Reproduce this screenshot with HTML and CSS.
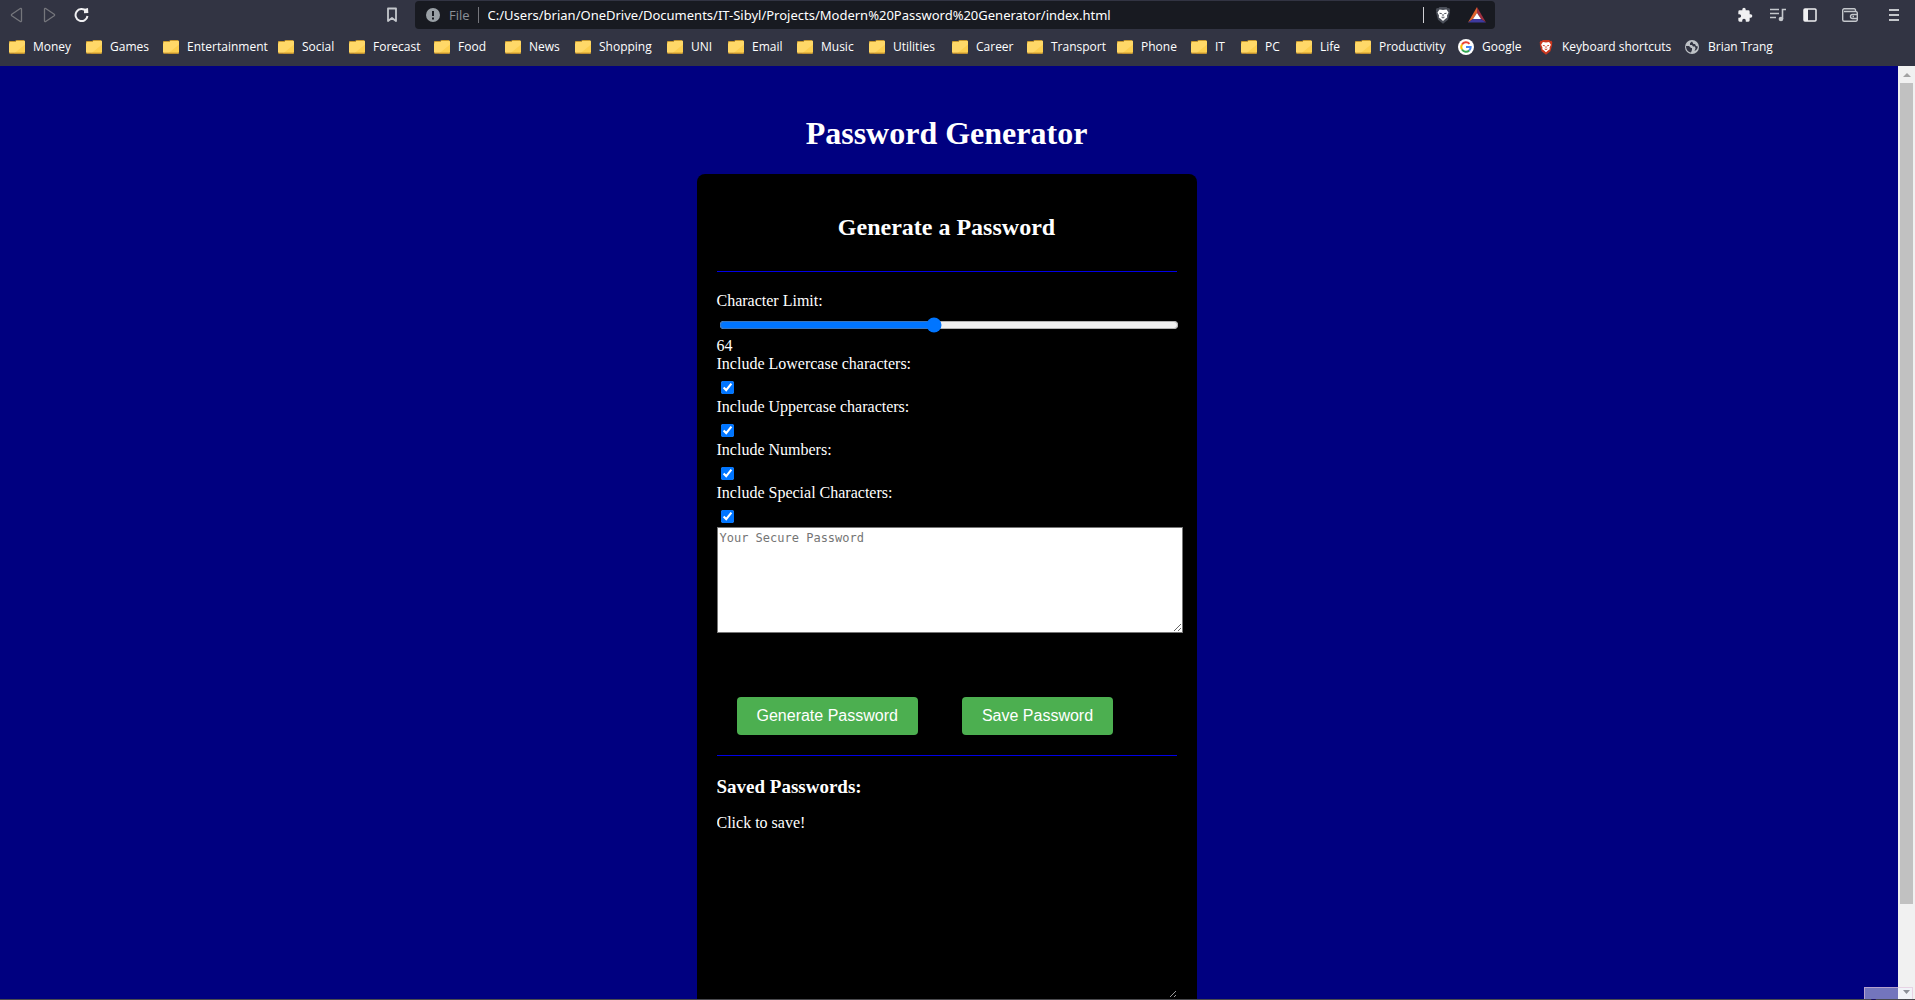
FILE: index.html
```html
<!DOCTYPE html>
<html lang="en">
<head>
<meta charset="utf-8">
<title>Password Generator</title>
<link rel="stylesheet" href="styles.css">
</head>
<body>
<svg class="defs" aria-hidden="true">
  <symbol id="folder" viewBox="0 0 16 14">
    <path d="M0 2.500a1 1 0 0 1 1-1h5.500l1-1h7.500a1 1 0 0 1 1 1v11a1 1 0 0 1-1 1h-14a1 1 0 0 1-1-1z" fill="#ffd868"/>
    <path d="M0 3.500v-1a1 1 0 0 1 1-1h5l1.500-1h7.500" fill="none" stroke="#c99a2e"/>
    <path d="M5 13.500l11-9v8a1 1 0 0 1-1 1z" fill="#fccf50"/>
    <path d="M.5 12.500a1 1 0 0 0 1 .7h13a1 1 0 0 0 1-.7" fill="none" stroke="#b98222"/>
  </symbol>
  <symbol id="lion" viewBox="0 0 16 18">
    <path d="M4.500 1h7l1.300 1.300 1.400-.2 1 2-.5 1.500.3 1-2 7.200-5 4-5-4-2-7.200.3-1-.5-1.500 1-2 1.400.2z"/>
    <path d="M4.500 3.500l3.500.5 3.500-.5 2 3-1.500 3 .2 2-2 1.500-2.200 2-2.200-2-2-1.500.2-2-1.500-3z" fill="#fff"/>
    <path d="M4.500 7.200l2.300.5M11.500 7.200l-2.300.5M8 8v2.500M6.500 11.200l1.500.8 1.500-.8" stroke="currentColor" fill="none"/>
  </symbol>
</svg>
<header class="chrome">
  <div class="toolbar">
    <nav class="nav-buttons" aria-label="Navigation">
      <button class="icon-button dim" aria-label="Back"><svg width="14" height="16" viewBox="0 0 14 16"><path d="M11.500 2v12a.8.8 0 0 1-1.200.5l-8.500-5.700a1 1 0 0 1 0-1.600l8.500-5.700a.8.8 0 0 1 1.200.5z" fill="none" stroke="currentColor" stroke-width="1.300"/></svg></button>
      <button class="icon-button dim" aria-label="Forward"><svg width="14" height="16" viewBox="0 0 14 16"><path d="M2.500 2v12a.8.8 0 0 0 1.200.5l8.500-5.700a1 1 0 0 0 0-1.600l-8.500-5.700a.8.8 0 0 0-1.200.5z" fill="none" stroke="currentColor" stroke-width="1.300"/></svg></button>
      <button class="icon-button" aria-label="Reload"><svg width="16" height="16" viewBox="0 0 16 16"><path d="M12 4a6 6 0 1 0 1.500 5" fill="none" stroke="currentColor" stroke-width="2"/><path d="M10 2l4-1 .3 5-4.300.3z" fill="currentColor"/></svg></button>
    </nav>
    <button class="icon-button soft" aria-label="Bookmark this page"><svg width="12" height="16" viewBox="0 0 12 16"><path d="M2 1.500h8v12.500l-4-3-4 3z" fill="none" stroke="currentColor" stroke-width="1.800" stroke-linejoin="round"/></svg></button>
    <div class="address">
      <svg width="14" height="14" viewBox="0 0 14 14"><circle cx="7" cy="7" r="7" fill="#9aa0a6"/><path d="M7 3v5M7 9.500v2" stroke="#181a21" stroke-width="2"/></svg>
      <label class="scheme" for="url">File</label>
      <input class="url" id="url" type="text" value="C:/Users/brian/OneDrive/Documents/IT-Sibyl/Projects/Modern%20Password%20Generator/index.html">
      <div class="address-actions">
        <button class="icon-button shield" aria-label="Shields"><svg width="16" height="18"><use href="#lion"/></svg></button>
        <button class="icon-button" aria-label="Rewards"><svg width="18" height="16" viewBox="0 0 18 16"><path d="M9 0L0 15.500l5-3.500 4-6z" fill="#e0622b"/><path d="M9 0l9 15.500-5-3.500-4-6z" fill="#9e2f3f"/><path d="M0 15.500h18l-5-3.500h-8z" fill="#3f3a9e"/><path d="M9 6l-4 6h8z" fill="#fff"/></svg></button>
      </div>
    </div>
    <div class="tools">
      <button class="icon-button" aria-label="Extensions"><svg width="16" height="16" viewBox="0 0 24 24"><path d="M20.500 11H19V7a2 2 0 0 0-2-2h-4V3.500a2.500 2.500 0 0 0-5 0V5H4a2 2 0 0 0-2 2v3.800h1.500a2.700 2.700 0 0 1 0 5.400H2V20a2 2 0 0 0 2 2h3.800v-1.500a2.700 2.700 0 0 1 5.400 0V22H17a2 2 0 0 0 2-2v-4h1.500a2.500 2.500 0 0 0 0-5z" fill="currentColor"/></svg></button>
      <button class="icon-button soft" aria-label="Media"><svg width="16" height="14" viewBox="0 0 16 14"><path d="M0 1.500h9M0 5.500h9M0 9.500h6M12.500 11V1.500H16" fill="none" stroke="currentColor" stroke-width="1.600"/><circle cx="11" cy="11" r="2.300" fill="currentColor"/></svg></button>
      <button class="icon-button" aria-label="Sidebar"><svg width="14" height="14" viewBox="0 0 14 14"><rect x="1" y="1" width="12" height="12" rx="1" fill="none" stroke="currentColor" stroke-width="1.500"/><path d="M1 1h4v12H1z" fill="currentColor"/></svg></button>
      <button class="icon-button soft wallet" aria-label="Wallet"><svg width="16" height="14" viewBox="0 0 16 14"><path d="M13.500 3.500V2a1.200 1.200 0 0 0-1.200-1.200H2.200A1.500 1.500 0 0 0 .7 2.300v9.500a1.500 1.500 0 0 0 1.500 1.500h11.600a1.500 1.500 0 0 0 1.500-1.500V5a1.500 1.500 0 0 0-1.500-1.500H2M15 6.500h-4.500a2 2 0 0 0 0 4H15M10.500 8.500h1.500" fill="none" stroke="currentColor" stroke-width="1.400"/></svg></button>
      <button class="icon-button soft menu" aria-label="Menu"><svg width="10" height="14" viewBox="0 0 10 14"><path d="M0 2h10M0 7h10M0 12h10" stroke="currentColor" stroke-width="2"/></svg></button>
    </div>
  </div>
  <nav class="bookmarks" aria-label="Bookmarks">
    <a href="#"><svg class="mark"><use href="#folder"/></svg>Money</a>
    <a href="#"><svg class="mark"><use href="#folder"/></svg>Games</a>
    <a href="#"><svg class="mark"><use href="#folder"/></svg>Entertainment</a>
    <a href="#"><svg class="mark"><use href="#folder"/></svg>Social</a>
    <a href="#"><svg class="mark"><use href="#folder"/></svg>Forecast</a>
    <a href="#"><svg class="mark"><use href="#folder"/></svg>Food</a>
    <a href="#"><svg class="mark"><use href="#folder"/></svg>News</a>
    <a href="#"><svg class="mark"><use href="#folder"/></svg>Shopping</a>
    <a href="#"><svg class="mark"><use href="#folder"/></svg>UNI</a>
    <a href="#"><svg class="mark"><use href="#folder"/></svg>Email</a>
    <a href="#"><svg class="mark"><use href="#folder"/></svg>Music</a>
    <a href="#"><svg class="mark"><use href="#folder"/></svg>Utilities</a>
    <a href="#"><svg class="mark"><use href="#folder"/></svg>Career</a>
    <a href="#"><svg class="mark"><use href="#folder"/></svg>Transport</a>
    <a href="#"><svg class="mark"><use href="#folder"/></svg>Phone</a>
    <a href="#"><svg class="mark"><use href="#folder"/></svg>IT</a>
    <a href="#"><svg class="mark"><use href="#folder"/></svg>PC</a>
    <a href="#"><svg class="mark"><use href="#folder"/></svg>Life</a>
    <a href="#"><svg class="mark"><use href="#folder"/></svg>Productivity</a>
    <a href="#"><svg class="site" viewBox="0 0 16 16"><circle cx="8" cy="8" r="8" fill="#fff"/><g fill="none" stroke-width="2"><path d="M11.500 4.800A4.700 4.700 0 0 0 4 5.500" stroke="#ea4335"/><path d="M4 5.500a4.700 4.700 0 0 0 0 5" stroke="#fbbc05"/><path d="M4 10.500a4.700 4.700 0 0 0 7.200 1" stroke="#34a853"/><path d="M11.200 11.500A4.700 4.700 0 0 0 12.700 8H8" stroke="#4285f4"/></g></svg>Google</a>
    <a href="#"><svg class="site brave"><use href="#lion"/></svg>Keyboard shortcuts</a>
    <a href="#"><svg class="site" viewBox="0 0 16 16"><circle cx="8" cy="8" r="7" fill="#bdc1c6"/><path d="M2 7h3l2 2h1v2l-1 2.500C4 13 2 10.500 2 7zM8 2.500L6 4v2h2l1 1.500h2l.5 2-1 2.500C12.500 11 13.800 9.500 13.800 7.500L12 7l-1-2H9.500z" fill="#323443"/></svg>Brian Trang</a>
  </nav>
</header>
<div class="viewport">
  <main class="page">
    <h1>Password Generator</h1>
    <section class="card">
      <h2>Generate a Password</h2>
      <hr>
      <form class="options">
        <label for="limit">Character Limit:</label>
        <input class="range" id="limit" type="range" min="8" max="128" value="64">
        <output for="limit">64</output>
        <label for="lower">Include Lowercase characters:</label>
        <input id="lower" type="checkbox" checked>
        <label for="upper">Include Uppercase characters:</label>
        <input id="upper" type="checkbox" checked>
        <label for="numbers">Include Numbers:</label>
        <input id="numbers" type="checkbox" checked>
        <label for="special">Include Special Characters:</label>
        <input id="special" type="checkbox" checked>
        <textarea class="result" aria-label="Password" placeholder="Your Secure Password"></textarea>
        <div class="actions">
          <button class="action" type="button">Generate Password</button>
          <button class="action" type="button">Save Password</button>
        </div>
      </form>
      <hr>
      <div class="saved">
        <h3>Saved Passwords:</h3>
        <p>Click to save!</p>
      </div>
    </section>
  </main>
  <div class="scrollbar" aria-hidden="true">
    <span class="arrow up"></span>
    <span class="thumb"></span>
    <span class="arrow down"></span>
  </div>
  <div class="corner" aria-hidden="true"><svg width="48" height="12" viewBox="0 0 48 12"><path d="M6.500 12v-2.500h4V12" fill="none" stroke="#1c1060"/><path d="M40.500 9v3" stroke="#444"/><path d="M38 0h7l-3.500 4z" fill="#8c9098"/></svg></div>
</div>
</body>
</html>
```
FILE: styles.css
```css
* {
  box-sizing: border-box;
}

body {
  margin: 0;
  height: 100vh;
  display: flex;
  flex-direction: column;
  overflow: hidden;
  background: #323443;
  font-family: "Liberation Serif", "Times New Roman", serif;
  font-size: 16px;
  line-height: 18px;
}

.defs {
  display: none;
}

/* Browser bar */
.chrome {
  flex: none;
  background: #323443;
  color: #fff;
  font-family: "Open Sans", "Segoe UI", sans-serif;
}

.toolbar {
  display: flex;
  align-items: center;
  height: 30px;
  padding: 0 16px 0 10px;
}

.nav-buttons {
  display: flex;
  gap: 18px;
  width: 376px;
}

.icon-button {
  display: flex;
  align-items: center;
  padding: 0;
  border: 0;
  background: none;
  color: #f0f0f2;
}

.dim {
  color: #75767c;
}

.soft {
  color: #c4c7cc;
}

.address {
  display: flex;
  align-items: center;
  gap: 9px;
  flex: 1;
  height: 28px;
  margin-left: 17px;
  padding: 0 9px 0 11px;
  border-radius: 4px;
  background: #181a21;
}

.scheme {
  padding-right: 8px;
  border-right: 1px solid #75767c;
  color: #8b9097;
  font-size: 13px;
  line-height: 16px;
}

.url {
  flex: 1;
  padding: 0;
  border: 0;
  outline: 0;
  background: none;
  color: #fff;
  font: 13px "Noto Sans", "Segoe UI", sans-serif;
}

.address-actions {
  display: flex;
  gap: 17px;
  padding-left: 11px;
  border-left: 1px solid #d0d0d4;
  height: 16px;
  align-items: center;
}

.shield {
  fill: #4b4f59;
  color: #4b4f59;
}

.tools {
  display: flex;
  width: 404px;
  align-items: center;
  justify-content: flex-end;
  gap: 17px;
}

.wallet {
  margin-left: 8px;
}

.menu {
  margin-left: 14px;
}

.bookmarks {
  display: grid;
  grid-template-columns: 77px 77px 115px 71px 85px 71px 70px 92px 61px 69px 72px 83px 75px 90px 74px 50px 55px 59px 103px 80px 146px auto;
  align-items: center;
  height: 36px;
  padding: 0 9px 3px;
}

.bookmarks a {
  display: flex;
  align-items: center;
  gap: 8px;
  color: #fff;
  font-size: 12px;
  line-height: 17px;
  text-decoration: none;
  white-space: nowrap;
}

.mark {
  width: 16px;
  height: 14px;
}

.site {
  width: 16px;
  height: 16px;
}

.brave {
  fill: #c8371f;
  color: #c8371f;
}

/* Page area */
.viewport {
  position: relative;
  display: flex;
  flex: 1;
  min-height: 0;
  border-bottom: 1px solid #4a4a4e;
}

.page {
  flex: 1;
  overflow: hidden;
  padding: 49px 5px 0 0;
  background: #000080;
  color: #fff;
}

h1 {
  margin: 0 0 23px;
  font-size: 32px;
  line-height: 36px;
  text-align: center;
}

.card {
  max-width: 500px;
  margin: 0 auto;
  padding: 40px 20px 20px;
  border-radius: 8px;
  background: #000;
}

h2 {
  margin: 0 0 30px;
  font-size: 24px;
  line-height: 27px;
  text-align: center;
}

hr {
  height: 1px;
  margin: 0 0 20px;
  border: 0;
  background: #0000e6;
}

.options {
  display: flex;
  flex-direction: column;
  align-items: flex-start;
}

.range {
  width: 460px;
  height: 16px;
  margin: 7px 2px 4px;
}

.options input[type="checkbox"] {
  width: 13px;
  height: 13px;
  margin: 8px 4px 4px;
}

.result {
  width: 466px;
  height: 106px;
  padding: 2px;
  border: 1px solid #767676;
  background: #fff;
  font: 12px/16px "DejaVu Sans Mono", monospace;
}

.actions {
  display: flex;
  gap: 44px;
  padding: 64px 20px 20px;
}

.action {
  padding: 10px 20px;
  border: 0;
  border-radius: 4px;
  background: #4caf50;
  color: #fff;
  font: 16px/18px "Liberation Sans", Arial, sans-serif;
}

.saved {
  height: 222px;
  overflow: auto;
  resize: both;
}

h3 {
  margin: 0 0 16px;
  font-size: 19px;
  line-height: 22px;
}

p {
  margin: 0;
}

.scrollbar {
  display: flex;
  flex-direction: column;
  align-items: center;
  width: 17px;
  background: #f1f1f1;
}

.arrow {
  height: 17px;
  display: flex;
  align-items: center;
}

.arrow::before {
  content: "";
  border: 4px solid transparent;
}

.up::before {
  border-top: 0;
  border-bottom-color: #a3a3a3;
}

.down::before {
  border-bottom: 0;
}

.thumb {
  width: 13px;
  height: 88%;
  margin-bottom: auto;
  background: #c1c1c1;
}

.corner {
  position: absolute;
  right: 2px;
  bottom: 0;
  width: 49px;
  height: 12px;
  border: 1px solid rgba(225, 190, 215, 0.6);
  border-bottom: 0;
  background: rgba(240, 245, 255, 0.48);
}
```
